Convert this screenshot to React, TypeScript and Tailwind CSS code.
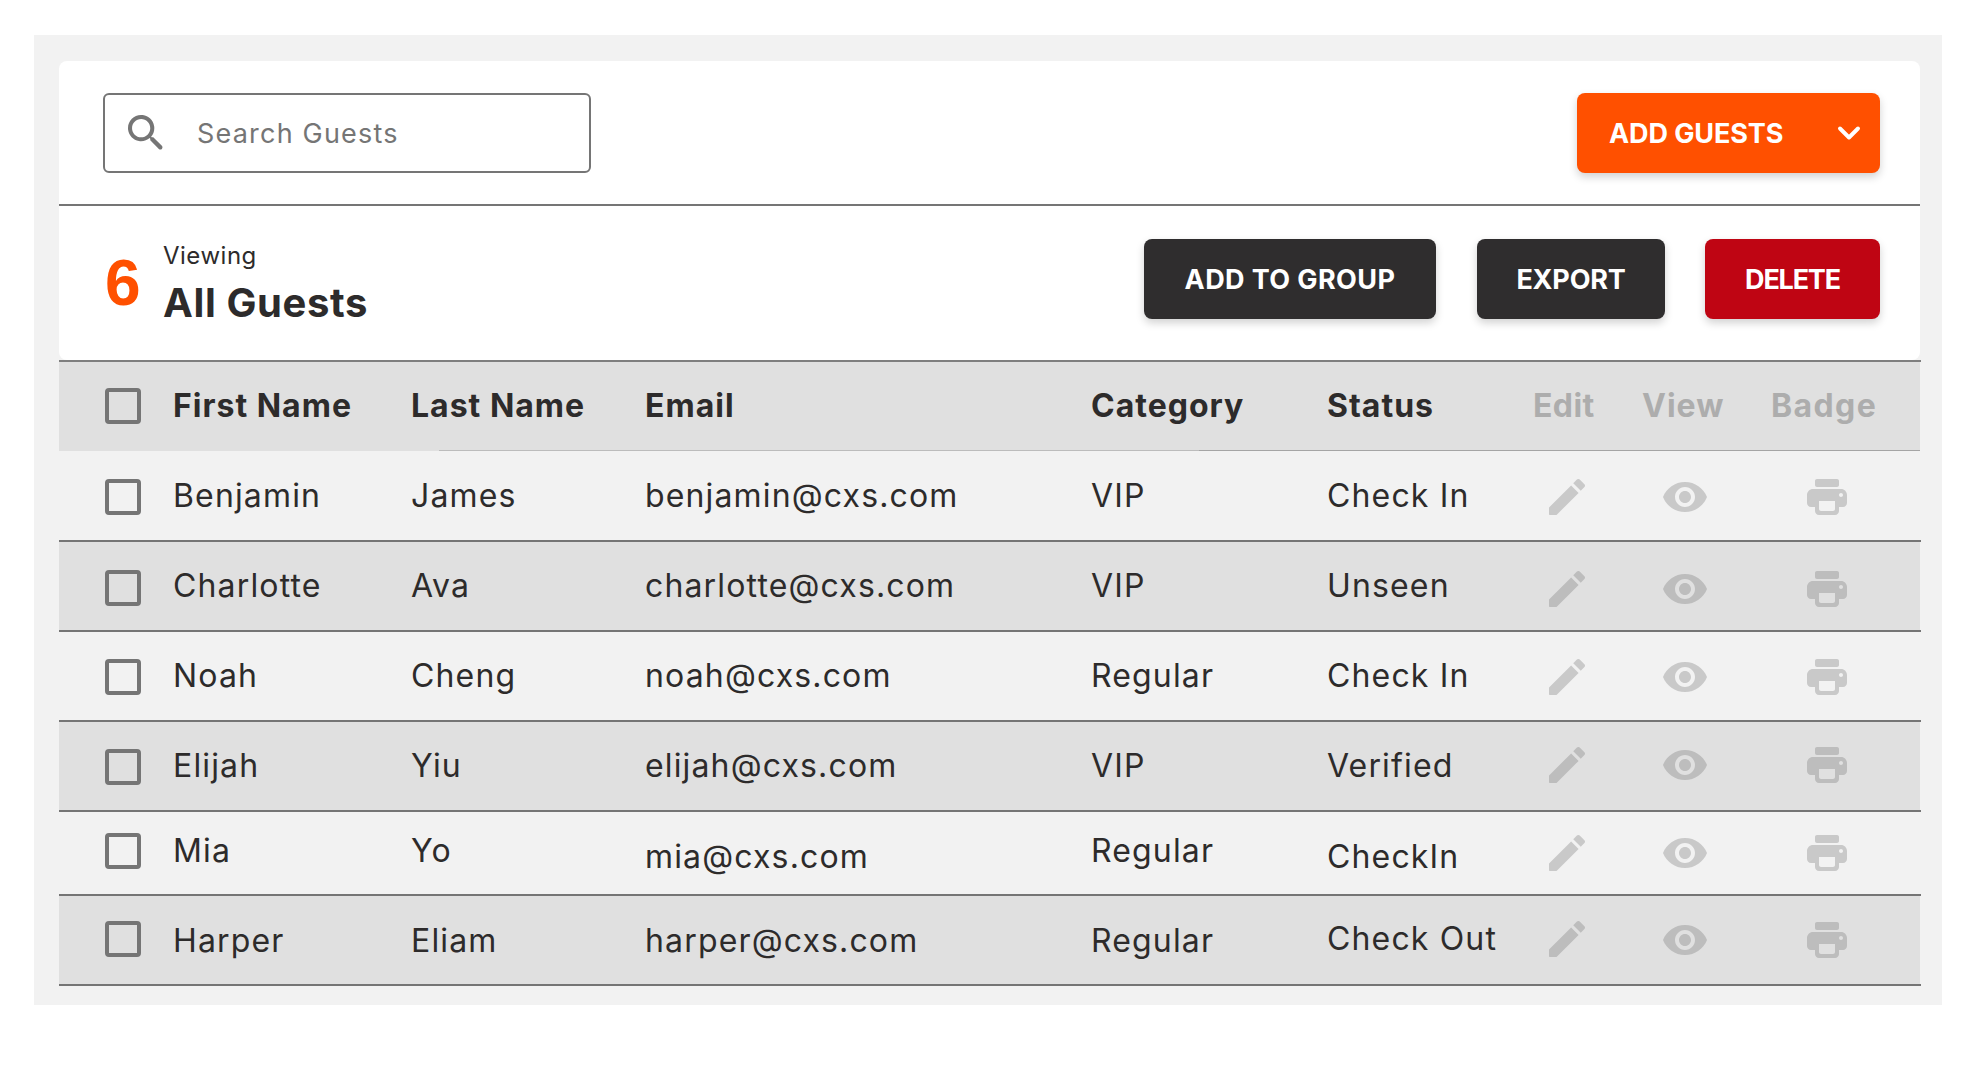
import React from "react";
import { ChevronDown } from "lucide-react";

const DARK = "#2d2b2b";

type Guest = {
  first: string;
  last: string;
  email: string;
  category: string;
  status: string;
  height: string;
  shade: boolean;
  iconShift: string;
  pencilShift?: string;
  boxShift: string;
  textShift?: string;
  emailShift?: string;
  statusShift?: string;
};

const guests: Guest[] = [
  { first: "Benjamin", last: "James", email: "benjamin@cxs.com", category: "VIP", status: "Check In", height: "h-[89px]", shade: false, iconShift: "pt-[3px]", boxShift: "pt-[3px]" },
  { first: "Charlotte", last: "Ava", email: "charlotte@cxs.com", category: "VIP", status: "Unseen", height: "h-[88px]", shade: true, iconShift: "pt-[5px]", boxShift: "pt-[3px]" },
  { first: "Noah", last: "Cheng", email: "noah@cxs.com", category: "Regular", status: "Check In", height: "h-[88px]", shade: false, iconShift: "pt-[2px]", boxShift: "pt-[1px]" },
  { first: "Elijah", last: "Yiu", email: "elijah@cxs.com", category: "VIP", status: "Verified", height: "h-[88px]", shade: true, iconShift: "pb-[2px]", boxShift: "pt-[2px]" },
  { first: "Mia", last: "Yo", email: "mia@cxs.com", category: "Regular", status: "CheckIn", height: "h-[82px]", shade: false, iconShift: "pt-0", boxShift: "pb-[4px]", textShift: "pb-[4px]", emailShift: "pt-[8px]", statusShift: "pt-[8px]" },
  { first: "Harper", last: "Eliam", email: "harper@cxs.com", category: "Regular", status: "Check Out", height: "h-[88px]", shade: true, iconShift: "pt-0", pencilShift: "pb-[2px]", boxShift: "pb-[2px]", textShift: "pt-[2px]", emailShift: "pt-[2px]", statusShift: "pb-[3px]" },
];

const PencilIcon = () => (
  <svg viewBox="3 3 18 18" className="w-[36px] h-[36px] fill-[#757575] opacity-[0.32]">
    <path d="M3 17.46v3.04c0 .28.22.5.5.5h3.04c.13 0 .26-.05.35-.15L17.81 9.94l-3.75-3.75L3.15 17.1c-.1.1-.15.22-.15.36zM20.71 7.04c.39-.39.39-1.02 0-1.41l-2.34-2.34c-.39-.39-1.02-.39-1.41 0l-1.83 1.83 3.75 3.75 1.83-1.83z" />
  </svg>
);

const EyeIcon = () => (
  <svg viewBox="1 4.5 22 15" className="w-[44px] h-[30px] fill-[#757575] opacity-[0.32]">
    <path d="M12 4.5C7 4.5 2.73 7.61 1 12c1.73 4.39 6 7.5 11 7.5s9.27-3.11 11-7.5c-1.73-4.39-6-7.5-11-7.5zM12 17c-2.76 0-5-2.24-5-5s2.24-5 5-5 5 2.24 5 5-2.24 5-5 5zm0-8c-1.66 0-3 1.34-3 3s1.34 3 3 3 3-1.34 3-3-1.34-3-3-3z" />
  </svg>
);

const PrintIcon = () => (
  <svg viewBox="2 3 20 18" className="w-[40px] h-[36px] fill-[#757575] opacity-[0.32]">
    <path d="M19 8H5c-1.66 0-3 1.34-3 3v4c0 1.1.9 2 2 2h2v2c0 1.1.9 2 2 2h8c1.1 0 2-.9 2-2v-2h2c1.1 0 2-.9 2-2v-4c0-1.66-1.34-3-3-3zm-4 11H9c-.55 0-1-.45-1-1v-4h8v4c0 .55-.45 1-1 1zm4-7c-.55 0-1-.45-1-1s.45-1 1-1 1 .45 1 1-.45 1-1 1zm-2-9H7c-.55 0-1 .45-1 1v2c0 .55.45 1 1 1h10c.55 0 1-.45 1-1V4c0-.55-.45-1-1-1z" />
  </svg>
);

const SearchIcon = () => (
  <svg viewBox="3 3 17.8 17.8" className="w-[36px] h-[36px] fill-[#757575] shrink-0">
    <path d="M15.5 14h-.79l-.28-.27c1.2-1.4 1.82-3.31 1.48-5.34-.47-2.78-2.79-5-5.59-5.34-4.23-.52-7.79 3.04-7.27 7.27.34 2.8 2.56 5.12 5.34 5.59 2.03.34 3.94-.28 5.34-1.48l.27.28v.79l4.25 4.25c.41.41 1.08.41 1.49 0 .41-.41.41-1.08 0-1.49L15.5 14zm-6 0C7.01 14 5 11.99 5 9.5S7.01 5 9.5 5 14 7.01 14 9.5 11.99 14 9.5 14z" />
  </svg>
);

const Checkbox = () => (
  <div className="w-[36px] h-[36px] rounded-[4px] border-[4px] border-[#757575]"></div>
);

const rowGrid = "grid grid-cols-[114px_238px_234px_446px_236px_206px_109px_129px_1fr] items-center";

const buttonBase = "h-[80px] rounded-[8px] text-white text-[27px] font-bold shadow-[0_4px_8px_rgba(0,0,0,0.18)]";

const App: React.FC = () => {
  return (
    <div className="min-h-[1066px] bg-white font-['Inter',sans-serif] pt-[35px] pl-[34px] pr-[30px]" style={{ color: DARK }}>
      <div className="h-[970px] bg-[#f2f2f2] pt-[26px] pl-[25px] pr-[22px]">
        {/* Top card */}
        <div className="h-[299px] bg-white rounded-[8px] flex flex-col">
          <div className="h-[145px] shrink-0 border-b-2 border-[#757575] flex items-start justify-between pt-[32px] pl-[44px] pr-[40px]">
            <div className="w-[488px] h-[80px] rounded-[6px] border-2 border-[#757575] flex items-center pl-[23px]">
              <SearchIcon />
              <span className="ml-[33px] pt-[2px] text-[27px] tracking-[1.2px] text-[#757575]">Search Guests</span>
            </div>
            <button className={`${buttonBase} w-[303px] bg-[#ff5000] flex items-center justify-between pl-[32px] pr-[13px]`}>
              <span className="pt-[2px] tracking-[-0.1px]">ADD GUESTS</span>
              <ChevronDown size={36} strokeWidth={2.6} />
            </button>
          </div>
          <div className="flex-1 flex items-start justify-between pl-[44px] pr-[40px] pt-[33px]">
            <div className="flex items-start">
              <span className="font-['Liberation_Sans',sans-serif] font-bold text-[64px] leading-none text-[#ff5000] w-[60px] pt-[12px] pl-[2px]">6</span>
              <div className="flex flex-col">
                <span className="text-[24px] leading-[30px] tracking-[0.5px] pt-[2px]">Viewing</span>
                <span className="text-[40px] leading-[50px] mt-[7px] font-bold tracking-[0.6px]">All Guests</span>
              </div>
            </div>
            <div className="flex gap-[40px]">
              <button className={`${buttonBase} w-[292px] bg-[#2f2d2e] pt-[2px] tracking-[0.4px]`}>ADD TO GROUP</button>
              <button className={`${buttonBase} w-[188px] bg-[#2f2d2e] pt-[2px] tracking-[-0.2px] ml-[1px]`}>EXPORT</button>
              <button className={`${buttonBase} w-[175px] bg-[#bf0513] pt-[2px] tracking-[-1.2px]`}>DELETE</button>
            </div>
          </div>
        </div>

        {/* Header row */}
        <div className="bg-[#e0e0e0]">
          <div className="h-[2px] bg-[#7f7f7f] mr-[-1px]"></div>
          <div className={`${rowGrid} h-[88px] text-[32px] font-bold tracking-[1px]`}>
            <div className="pl-[46px]"><Checkbox /></div>
            <div>First Name</div>
            <div>Last Name</div>
            <div>Email</div>
            <div>Category</div>
            <div>Status</div>
            <div className="text-[#adadad] tracking-[0.4px]">Edit</div>
            <div className="text-[#adadad]">View</div>
            <div className="text-[#adadad] tracking-[1.4px]">Badge</div>
          </div>
          <div className="flex h-px ml-[380px]">
            <div className="w-[760px] bg-[#bcbcbc]"></div>
            <div className="flex-1 bg-[#a5a5a5]"></div>
          </div>
        </div>

        {guests.map((g) => (
          <div key={g.first}>
            <div className={`${rowGrid} ${g.height} ${g.shade ? "bg-[#e0e0e0]" : "bg-transparent"} text-[32px] tracking-[1.15px]`}>
              <div className={`pl-[46px] ${g.boxShift}`}><Checkbox /></div>
              <div className={g.textShift}>{g.first}</div>
              <div className={g.textShift}>{g.last}</div>
              <div className={g.emailShift}>{g.email}</div>
              <div className={g.textShift}>{g.category}</div>
              <div className={g.statusShift}>{g.status}</div>
              <div className={`pl-[16px] ${g.pencilShift ?? g.iconShift}`}><PencilIcon /></div>
              <div className={`pl-[21px] ${g.iconShift}`}><EyeIcon /></div>
              <div className={`pl-[36px] ${g.iconShift}`}><PrintIcon /></div>
            </div>
            <div className="h-[2px] bg-[#757575] mr-[-1px]"></div>
          </div>
        ))}
      </div>
    </div>
  );
};

export default App;
